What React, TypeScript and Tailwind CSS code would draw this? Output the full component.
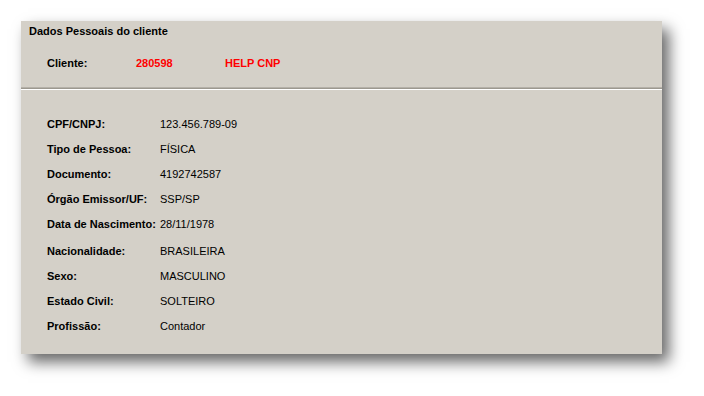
import React from 'react';

const rows: { label: string; value: string; gap?: boolean }[] = [
  { label: 'CPF/CNPJ:', value: '123.456.789-09' },
  { label: 'Tipo de Pessoa:', value: 'FÍSICA' },
  { label: 'Documento:', value: '4192742587' },
  { label: 'Órgão Emissor/UF:', value: 'SSP/SP' },
  { label: 'Data de Nascimento:', value: '28/11/1978' },
  { label: 'Nacionalidade:', value: 'BRASILEIRA', gap: true },
  { label: 'Sexo:', value: 'MASCULINO' },
  { label: 'Estado Civil:', value: 'SOLTEIRO' },
  { label: 'Profissão:', value: 'Contador' },
];

const App = () => {
  return (
    <div
      className="w-[704px] h-[396px] bg-white pt-[21px] pl-[21px] text-[11px] text-black"
      style={{ fontFamily: '"Liberation Sans", Arial, sans-serif' }}
    >
      <div className="w-[641px] h-[333px] bg-[#d4d0c8] shadow-[7px_8px_14px_rgba(0,0,0,0.6)] flex flex-col">
        {/* Header */}
        <div className="h-[66px] flex flex-col">
          <div className="h-[20px] flex items-center pl-[8px] font-bold">Dados Pessoais do cliente</div>
          <div className="h-[44px] flex items-center pl-[26px] font-bold">
            <span className="w-[89px]">Cliente:</span>
            <span className="w-[89px] text-[#ff0000]">280598</span>
            <span className="text-[#ff0000]">HELP CNP</span>
          </div>
        </div>

        {/* Divider */}
        <div className="border-t border-[#b4b0a8]" />
        <div className="border-t border-[#9c988f]" />
        <div className="border-t border-white" />

        {/* Details */}
        <div className="flex flex-col pt-[22px] pl-[26px]">
          {rows.map((r) => (
            <div key={r.label} className={`h-[25px] flex items-center ${r.gap ? 'mt-[2px]' : ''}`}>
              <span className="w-[113px] font-bold">{r.label}</span>
              <span>{r.value}</span>
            </div>
          ))}
        </div>
      </div>
    </div>
  );
};

export default App;
